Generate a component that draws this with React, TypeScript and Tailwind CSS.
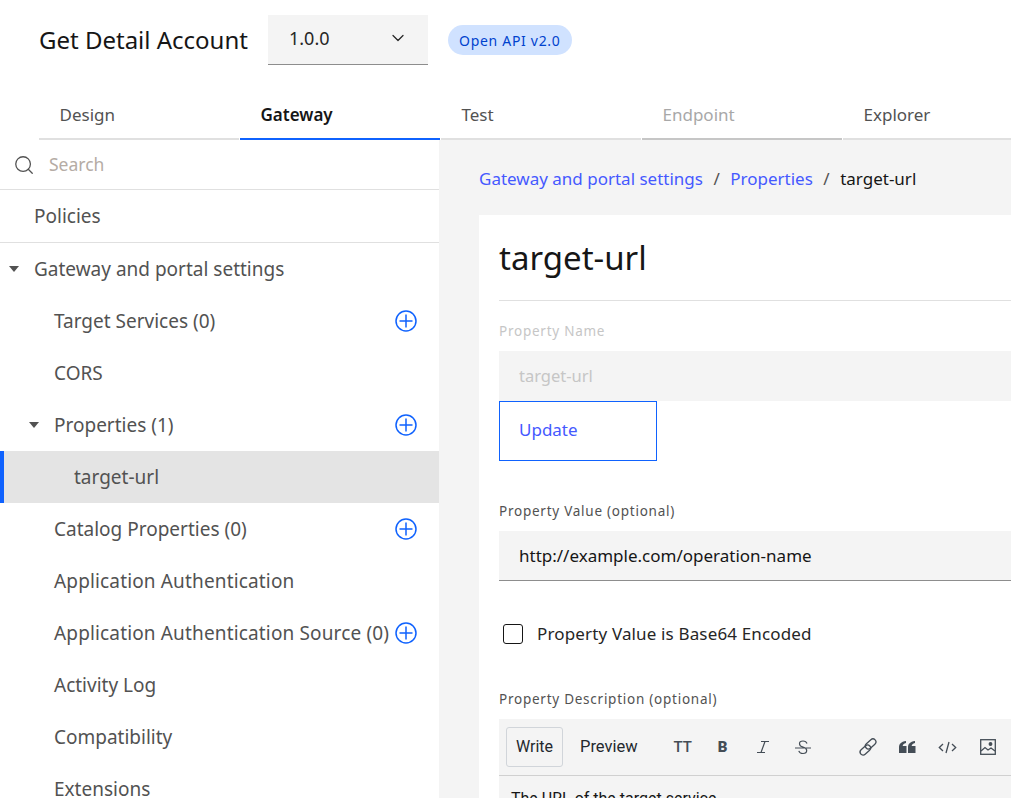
import type { ReactNode } from 'react'
import { ChevronDown, Search } from 'lucide-react'

const plex = "font-['Noto_Sans','Liberation_Sans',sans-serif]"

function PlusCircle() {
  return (
    <svg width="22" height="22" viewBox="0 0 22 22" fill="none" stroke="#0f62fe" strokeWidth="1.5">
      <circle cx="11" cy="11" r="10" />
      <path d="M11 4.5v13M4.5 11h13" />
    </svg>
  )
}

function Caret() {
  return (
    <svg width="10" height="6" viewBox="0 0 10 6" fill="#525252">
      <path d="M0 0h10L5 6z" />
    </svg>
  )
}

function NavRow({ label, indent, plus, caret, wide }: { label: string; indent: string; plus?: boolean; caret?: string; wide?: boolean }) {
  return (
    <div className={`relative flex h-[52px] shrink-0 items-center justify-between pr-[22px] ${indent}`}>
      {caret && <span className={`absolute top-[23px] flex ${caret}`}><Caret /></span>}
      <span className={`whitespace-nowrap text-[19px] text-[#525252] ${wide ? 'tracking-[0.15px]' : ''}`}>{label}</span>
      {plus && <PlusCircle />}
    </div>
  )
}

function Tab({ label, active, disabled }: { label: string; active?: boolean; disabled?: boolean }) {
  return (
    <div
      className={`mr-px flex h-[50px] w-[200px] shrink-0 items-center border-b-2 pl-[20.5px] pt-[2px] text-[17px] ${
        active
          ? 'border-[#0f62fe] font-semibold text-[#161616]'
          : disabled
            ? 'border-[#c6c6c6] text-[#a8a8a8]'
            : 'border-[#e0e0e0] text-[#525252]'
      }`}
    >
      {label}
    </div>
  )
}

function Sidebar() {
  return (
    <aside className="h-full w-[439px] shrink-0 overflow-hidden bg-white">
      <div className="flex h-[50px] items-center gap-[14px] border-b border-[#e0e0e0] pl-[13px]">
        <Search size={22} strokeWidth={1.4} className="text-[#525252]" />
        <span className="text-[17.500px] text-[#b5aca5]">Search</span>
      </div>
      <div className="flex h-[53px] items-center border-b border-[#e0e0e0] pl-[34px] text-[19px] text-[#525252]">
        Policies
      </div>
      <NavRow label="Gateway and portal settings" indent="pl-[34px]" caret="left-[9px]" />
      <NavRow label="Target Services (0)" indent="pl-[54px]" plus />
      <NavRow label="CORS" indent="pl-[54px]" />
      <NavRow label="Properties (1)" indent="pl-[54px]" plus caret="left-[29px]" />
      <div className="flex h-[52px] items-center border-l-4 border-[#0f62fe] bg-[#e4e4e4] pl-[70px] text-[19px] text-[#525252]">
        target-url
      </div>
      <NavRow label="Catalog Properties (0)" indent="pl-[54px]" plus />
      <NavRow label="Application Authentication" indent="pl-[54px]" wide />
      <NavRow label="Application Authentication Source (0)" indent="pl-[54px]" plus wide />
      <NavRow label="Activity Log" indent="pl-[54px]" />
      <NavRow label="Compatibility" indent="pl-[54px]" />
      <NavRow label="Extensions" indent="pl-[54px]" />
    </aside>
  )
}

function ToolIcon({ children }: { children: ReactNode }) {
  return <span className="flex h-5 w-10 shrink-0 items-center justify-center text-[#444d56]">{children}</span>
}

function Toolbar() {
  return (
    <div className="flex h-[57px] items-center border-b border-[#d0d0d0] pl-[7px] font-['Roboto',sans-serif] text-[#24292e]">
      <div className="flex h-10 w-[57px] items-center justify-center rounded-[3px] border border-[#d1d5da] text-[16px]">Write</div>
      <div className="ml-[17px] text-[16.500px]">Preview</div>
      <div className="ml-[25px] flex items-center">
        <ToolIcon><span className="text-[15px] font-medium">TT</span></ToolIcon>
        <ToolIcon><span className="text-[15px] font-black">B</span></ToolIcon>
        <ToolIcon>
          <svg width="14" height="14" viewBox="0 0 14 14" fill="none" stroke="currentColor" strokeWidth="1.2">
            <path d="M5 1.500h8M1 12.500h8M9 1.500L5 12.500" />
          </svg>
        </ToolIcon>
        <ToolIcon>
          <svg width="16" height="15" viewBox="0 0 16 15" fill="none" stroke="currentColor" strokeWidth="1.2">
            <path d="M0 8h16M12 3.500C11.500 2 10 1 8 1 5.800 1 4.500 2.200 4.500 3.700 4.500 5.500 6 6.500 8 7c2.500.8 3.700 1.800 3.700 3.500 0 1.900-1.700 3-3.700 3-2.200 0-3.700-1-4.200-2.700" />
          </svg>
        </ToolIcon>
      </div>
      <div className="ml-[25px] flex items-center">
        <ToolIcon>
          <svg width="20" height="18" viewBox="0 0 20 18" fill="none" stroke="currentColor" strokeWidth="1.3">
            <g transform="rotate(-42 10 9)">
              <rect x="0" y="6.500" width="12" height="6" rx="3" />
              <rect x="8" y="5.500" width="12" height="6" rx="3" />
            </g>
          </svg>
        </ToolIcon>
        <ToolIcon>
          <svg width="17" height="12" viewBox="0 0 17 12" fill="currentColor">
            <path d="M0 6.500C0 3 2 .8 7 0v2C4.800 2.500 3.800 3.500 3.700 5H7.500v7H0zM9 6.500C9 3 11 .8 16 0v2c-2.200.5-3.200 1.500-3.300 3h3.800v7H9z" />
          </svg>
        </ToolIcon>
        <ToolIcon>
          <svg width="19" height="13" viewBox="0 0 19 13" fill="none" stroke="currentColor" strokeWidth="1.3">
            <path d="M5 3L1.300 6.500 5 10M14 3l3.700 3.500L14 10M11 1L8 12" />
          </svg>
        </ToolIcon>
        <ToolIcon>
          <svg width="16" height="16" viewBox="0 0 16 16" fill="none" stroke="currentColor" strokeWidth="1.3">
            <rect x=".7" y=".7" width="14.600" height="14.600" />
            <path d="M1 12l4-3.500 3 2.500 3-2 4 3" />
            <circle cx="10.500" cy="5" r="1.300" fill="currentColor" />
          </svg>
        </ToolIcon>
      </div>
    </div>
  )
}

function FieldLabel({ children, className }: { children: ReactNode; className: string }) {
  return <label className={`block h-[20px] text-[13.500px] leading-[20px] tracking-[0.75px] ${className}`}>{children}</label>
}

function Main() {
  return (
    <main className="flex h-full min-w-0 flex-1 flex-col overflow-hidden bg-[#f4f4f4] pl-10">
      <div className="flex h-[75px] shrink-0 items-center gap-[10.500px] whitespace-nowrap pt-[3px] text-[17px] text-[#161616]">
        <span className="text-[#4559ff]">Gateway and portal settings</span>
        <span className="text-[#525252]">/</span>
        <span className="text-[#4559ff]">Properties</span>
        <span className="text-[#525252]">/</span>
        <span>target-url</span>
      </div>
      <section className="flex-1 bg-white pl-5">
        <h1 className="flex h-[86px] items-center border-b border-[#e0e0e0] text-[33px] text-[#161616]">target-url</h1>
        <FieldLabel className="mt-[20px] text-[#c6c6c6]">Property Name</FieldLabel>
        <div className="mt-[10px] flex h-[50px] items-center bg-[#f4f4f4] pl-5 text-[16.500px] text-[#c6c6c6]">target-url</div>
        <div className="flex h-[60px] w-[158px] items-center border border-[#0f62fe] pb-[2px] pl-[19px] text-[17px] text-[#4559ff]">Update</div>
        <FieldLabel className="mt-10 text-[#525252]">Property Value (optional)</FieldLabel>
        <div className="mt-[10px] flex h-[50px] items-center border-b border-[#8d8d8d] bg-[#f4f4f4] pl-5 text-[17px] text-[#161616]">
          http://example.com/operation-name
        </div>
        <div className="mt-[43px] flex h-5 items-center gap-[14px] pl-1">
          <span className="size-5 rounded-[3px] border-[1.500px] border-[#161616]" />
          <span className="text-[17px] tracking-[0.15px] text-[#262626]">Property Value is Base64 Encoded</span>
        </div>
        <FieldLabel className="mt-[45px] text-[#525252]">Property Description (optional)</FieldLabel>
        <div className="mt-[10px] bg-[#f4f4f4]">
          <Toolbar />
          <div className="pl-3 pt-[11px] font-['Roboto',sans-serif] text-[16px] text-[#161616]">The URL of the target service</div>
        </div>
      </section>
    </main>
  )
}

export default function App() {
  return (
    <div className={`flex h-[798px] w-[1011px] flex-col overflow-hidden bg-white ${plex}`}>
      <header className="flex h-[90px] shrink-0 items-start pl-[39px] pt-[15px]">
        <h1 className="flex h-[50px] w-[229px] items-center text-[24px] text-[#161616]">Get Detail Account</h1>
        <div className="flex h-[50px] w-[160px] items-center justify-between border-b border-[#8d8d8d] bg-[#f4f4f4] pb-[3px] pl-[21px] pr-[20px] text-[18px] text-[#262626]">
          1.0.0
          <ChevronDown size={20} strokeWidth={1.5} />
        </div>
        <span className="ml-5 mt-[10px] flex h-[30px] items-center rounded-full bg-[#d0e2ff] px-[11px] text-[14px] tracking-[0.7px] text-[#0043ce]">Open API v2.0</span>
      </header>
      <nav className="flex h-[50px] shrink-0 pl-[39px]">
        <Tab label="Design" />
        <Tab label="Gateway" active />
        <Tab label="Test" />
        <Tab label="Endpoint" disabled />
        <Tab label="Explorer" />
      </nav>
      <div className="flex min-h-0 flex-1">
        <Sidebar />
        <Main />
      </div>
    </div>
  )
}
